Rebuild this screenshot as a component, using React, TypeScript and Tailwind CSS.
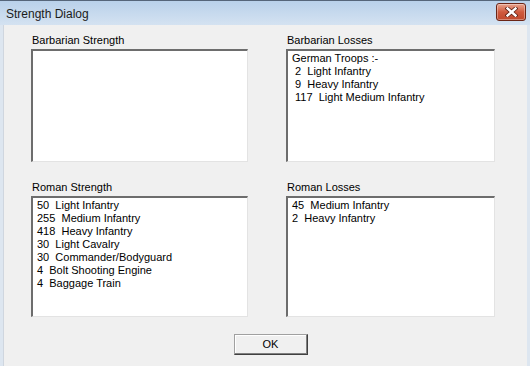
import React from "react";

const font = { fontFamily: '"Liberation Sans", Arial, sans-serif' };

function ListBox({ label, lines, width, height }: { label: string; lines: string[]; width: string; height: string }) {
  return (
    <div className="flex flex-col">
      <div className="h-[13px] text-[11px] leading-[13px] text-black pl-[1px]">{label}</div>
      <div
        className={`mt-[2px] ${width} ${height} bg-white border-t-2 border-l-2 border-r border-b border-t-[#6d6d6d] border-l-[#6d6d6d] border-r-[#e3e3e3] border-b-[#e3e3e3] pt-[1px] pl-[4px]`}
      >
        {lines.map((l, i) => (
          <div key={i} className="text-[11px] leading-[13px] text-black whitespace-pre">
            {l}
          </div>
        ))}
      </div>
    </div>
  );
}

export default function App() {
  return (
    <div className="w-[530px] h-[366px] overflow-hidden flex flex-col bg-[#f0f0f0]" style={font}>
      {/* title bar */}
      <div className="h-[25px] shrink-0 flex items-center justify-between border-t border-t-[#56667a] bg-gradient-to-b from-[#b9d1ea] to-[#d4e2f1] pl-[6px] pr-[4px]">
        <span className="text-[12px] text-[#1b1b1b] pt-[1px]">Strength Dialog</span>
        <div className="w-[30px] h-[18px] mb-[2px] rounded-[3px] border border-[#6b2516] bg-gradient-to-b from-[#e8a48f] via-[#cf5a3e] to-[#c0492d] flex items-center justify-center shadow-[inset_0_0_0_1px_rgba(255,255,255,0.35)]">
          <svg width="13" height="10" viewBox="0 0 13 10">
            <path d="M2.5 1.5 L10.5 8.5 M10.5 1.5 L2.5 8.5" stroke="#5a1e12" strokeWidth="4" strokeLinecap="square" />
            <path d="M2.5 1.5 L10.5 8.5 M10.5 1.5 L2.5 8.5" stroke="#ffffff" strokeWidth="2.4" strokeLinecap="square" />
          </svg>
        </div>
      </div>

      {/* client */}
      <div className="flex-1 flex flex-col border-l-[3px] border-r-[3px] border-[#dde6f0]">
        <div className="flex-1 flex flex-col border-l border-[#cfd6df] pl-[27px] pt-[9px]">
          <div className="flex gap-[38px]">
            <ListBox label="Barbarian Strength" lines={[]} width="w-[217px]" height="h-[113px]" />
            <ListBox
              label="Barbarian Losses"
              lines={["German Troops :-", " 2  Light Infantry", " 9  Heavy Infantry", " 117  Light Medium Infantry"]}
              width="w-[209px]"
              height="h-[113px]"
            />
          </div>
          <div className="flex gap-[38px] mt-[19px]">
            <ListBox
              label="Roman Strength"
              lines={[
                "50  Light Infantry",
                "255  Medium Infantry",
                "418  Heavy Infantry",
                "30  Light Cavalry",
                "30  Commander/Bodyguard",
                "4  Bolt Shooting Engine",
                "4  Baggage Train",
              ]}
              width="w-[217px]"
              height="h-[121px]"
            />
            <ListBox
              label="Roman Losses"
              lines={["45  Medium Infantry", "2  Heavy Infantry"]}
              width="w-[209px]"
              height="h-[121px]"
            />
          </div>
          <div className="flex justify-center mt-[17px] pr-[27px]">
            <button className="w-[74px] h-[21px] ml-[10px] bg-[#f0f0f0] border border-t-[#a0a0a0] border-l-[#a0a0a0] border-r-[#404040] border-b-[#404040] shadow-[inset_-1px_-1px_0_#808080,inset_1px_1px_0_#ffffff] text-[11px] text-black flex items-center justify-center">
              OK
            </button>
          </div>
        </div>
      </div>
    </div>
  );
}
